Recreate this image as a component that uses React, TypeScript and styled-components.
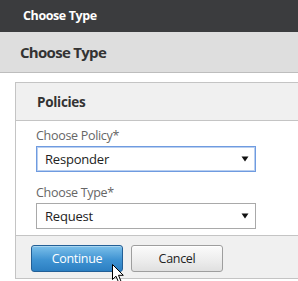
import React from "react";
import styled, { createGlobalStyle } from "styled-components";

const Global = createGlobalStyle`
	html, body {
		margin: 0;
		padding: 0;
		background: #ffffff;
		overflow: hidden;
		font-family: "Open Sans", "Noto Sans", sans-serif;
	}
`;

interface FieldProps {
	label: string;
	value: string;
	focused?: boolean;
}

function Field(props: FieldProps): JSX.Element {
	return (
		<FieldBox>
			<Label>{props.label}</Label>
			<SelectBox $focused={props.focused}>
				<span>{props.value}</span>
				<Arrow width="8" height="6" viewBox="0 0 8 6">
					<path d="M0.5 0.5 H7.5 L4 5.5 Z" fill="#111" />
				</Arrow>
			</SelectBox>
		</FieldBox>
	);
}

function App(): JSX.Element {
	return (
		<Page>
			<Global />
			<TopBar>Choose Type</TopBar>
			<Header>Choose Type</Header>
			<Content>
				<Panel>
					<PanelHead>Policies</PanelHead>
					<PanelBody>
						<Field label="Choose Policy*" value="Responder" focused />
						<Field label="Choose Type*" value="Request" />
					</PanelBody>
					<Footer>
						<Button $primary>Continue</Button>
						<Button>Cancel</Button>
					</Footer>
				</Panel>
			</Content>
			<Cursor width="13" height="20" viewBox="0 0 13 20">
				<path
					d="M0.5 0.5 L0.5 15.5 L4 12.2 L6.6 18.3 L9 17.3 L6.5 11.3 L11.3 11.3 Z"
					fill="#fff"
					stroke="#000"
					strokeWidth="1"
					strokeLinejoin="miter"
				/>
			</Cursor>
		</Page>
	);
}

const Page = styled.div`
	position: relative;
	width: 298px;
	height: 281px;
	overflow: hidden;
`;

const TopBar = styled.div`
	height: 32px;
	background: #3b3c3e;
	color: #ffffff;
	font-weight: 700;
	font-size: 12.5px;
	letter-spacing: -0.4px;
	line-height: 32px;
	padding-left: 23px;
`;

const Header = styled.div`
	height: 40px;
	background: #dedede;
	border-bottom: 1px solid #bdbdbd;
	color: #333333;
	font-weight: 700;
	font-size: 15px;
	letter-spacing: -0.7px;
	line-height: 40px;
	padding-left: 20px;
`;

const Content = styled.div`
	padding: 9px 0 0 15px;
`;

const Panel = styled.div`
	width: 320px;
	border: 1px solid #c4c4c4;
	background: #ffffff;
`;

const PanelHead = styled.div`
	height: 37px;
	background: #f0f0f0;
	border-bottom: 1px solid #c4c4c4;
	color: #333333;
	font-weight: 700;
	font-size: 13.5px;
	letter-spacing: -0.3px;
	line-height: 38px;
	padding-left: 21px;
`;

const PanelBody = styled.div`
	display: flex;
	flex-direction: column;
	gap: 12px;
	padding: 6px 0 6px 20px;
`;

const FieldBox = styled.div`
	display: flex;
	flex-direction: column;
`;

const Label = styled.div`
	height: 19px;
	line-height: 17px;
	font-size: 12.5px;
	letter-spacing: -0.3px;
	color: #666666;
`;

const SelectBox = styled.div<{ $focused?: boolean }>`
	box-sizing: border-box;
	width: 220px;
	height: 26px;
	display: flex;
	align-items: center;
	justify-content: space-between;
	padding: 0 6px 0 8px;
	border: 1px solid ${(p) => (p.$focused ? "#6f9be0" : "#a9a9a9")};
	box-shadow: ${(p) => (p.$focused ? "inset 0 0 0 1px #b9cff0" : "none")};
	background: #ffffff;
	color: #222222;
	font-size: 13px;
	letter-spacing: -0.2px;
`;

const Arrow = styled.svg`
	display: block;
`;

const Footer = styled.div`
	display: flex;
	gap: 8px;
	height: 33px;
	padding: 9px 0 0 15px;
	background: #f0f0f0;
	border-top: 1px solid #c4c4c4;
`;

const Button = styled.button<{ $primary?: boolean }>`
	box-sizing: border-box;
	width: 92px;
	height: 27px;
	border-radius: 3px;
	font-family: inherit;
	font-size: 12.5px;
	letter-spacing: -0.3px;
	padding: 0;
	border: 1px solid ${(p) => (p.$primary ? "#235f96" : "#9e9e9e")};
	color: ${(p) => (p.$primary ? "#ffffff" : "#222222")};
	background: ${(p) =>
		p.$primary
			? "linear-gradient(#7cc0ea, #3f93d2 55%, #2c7fc2)"
			: "linear-gradient(#fbfbfb, #ececec 60%, #e0e0e0)"};
	box-shadow: ${(p) =>
		p.$primary ? "inset 0 1px 0 rgba(255,255,255,0.35)" : "inset 0 1px 0 #ffffff"};
`;

const Cursor = styled.svg`
	position: absolute;
	left: 112px;
	top: 264px;
`;

export default App;
